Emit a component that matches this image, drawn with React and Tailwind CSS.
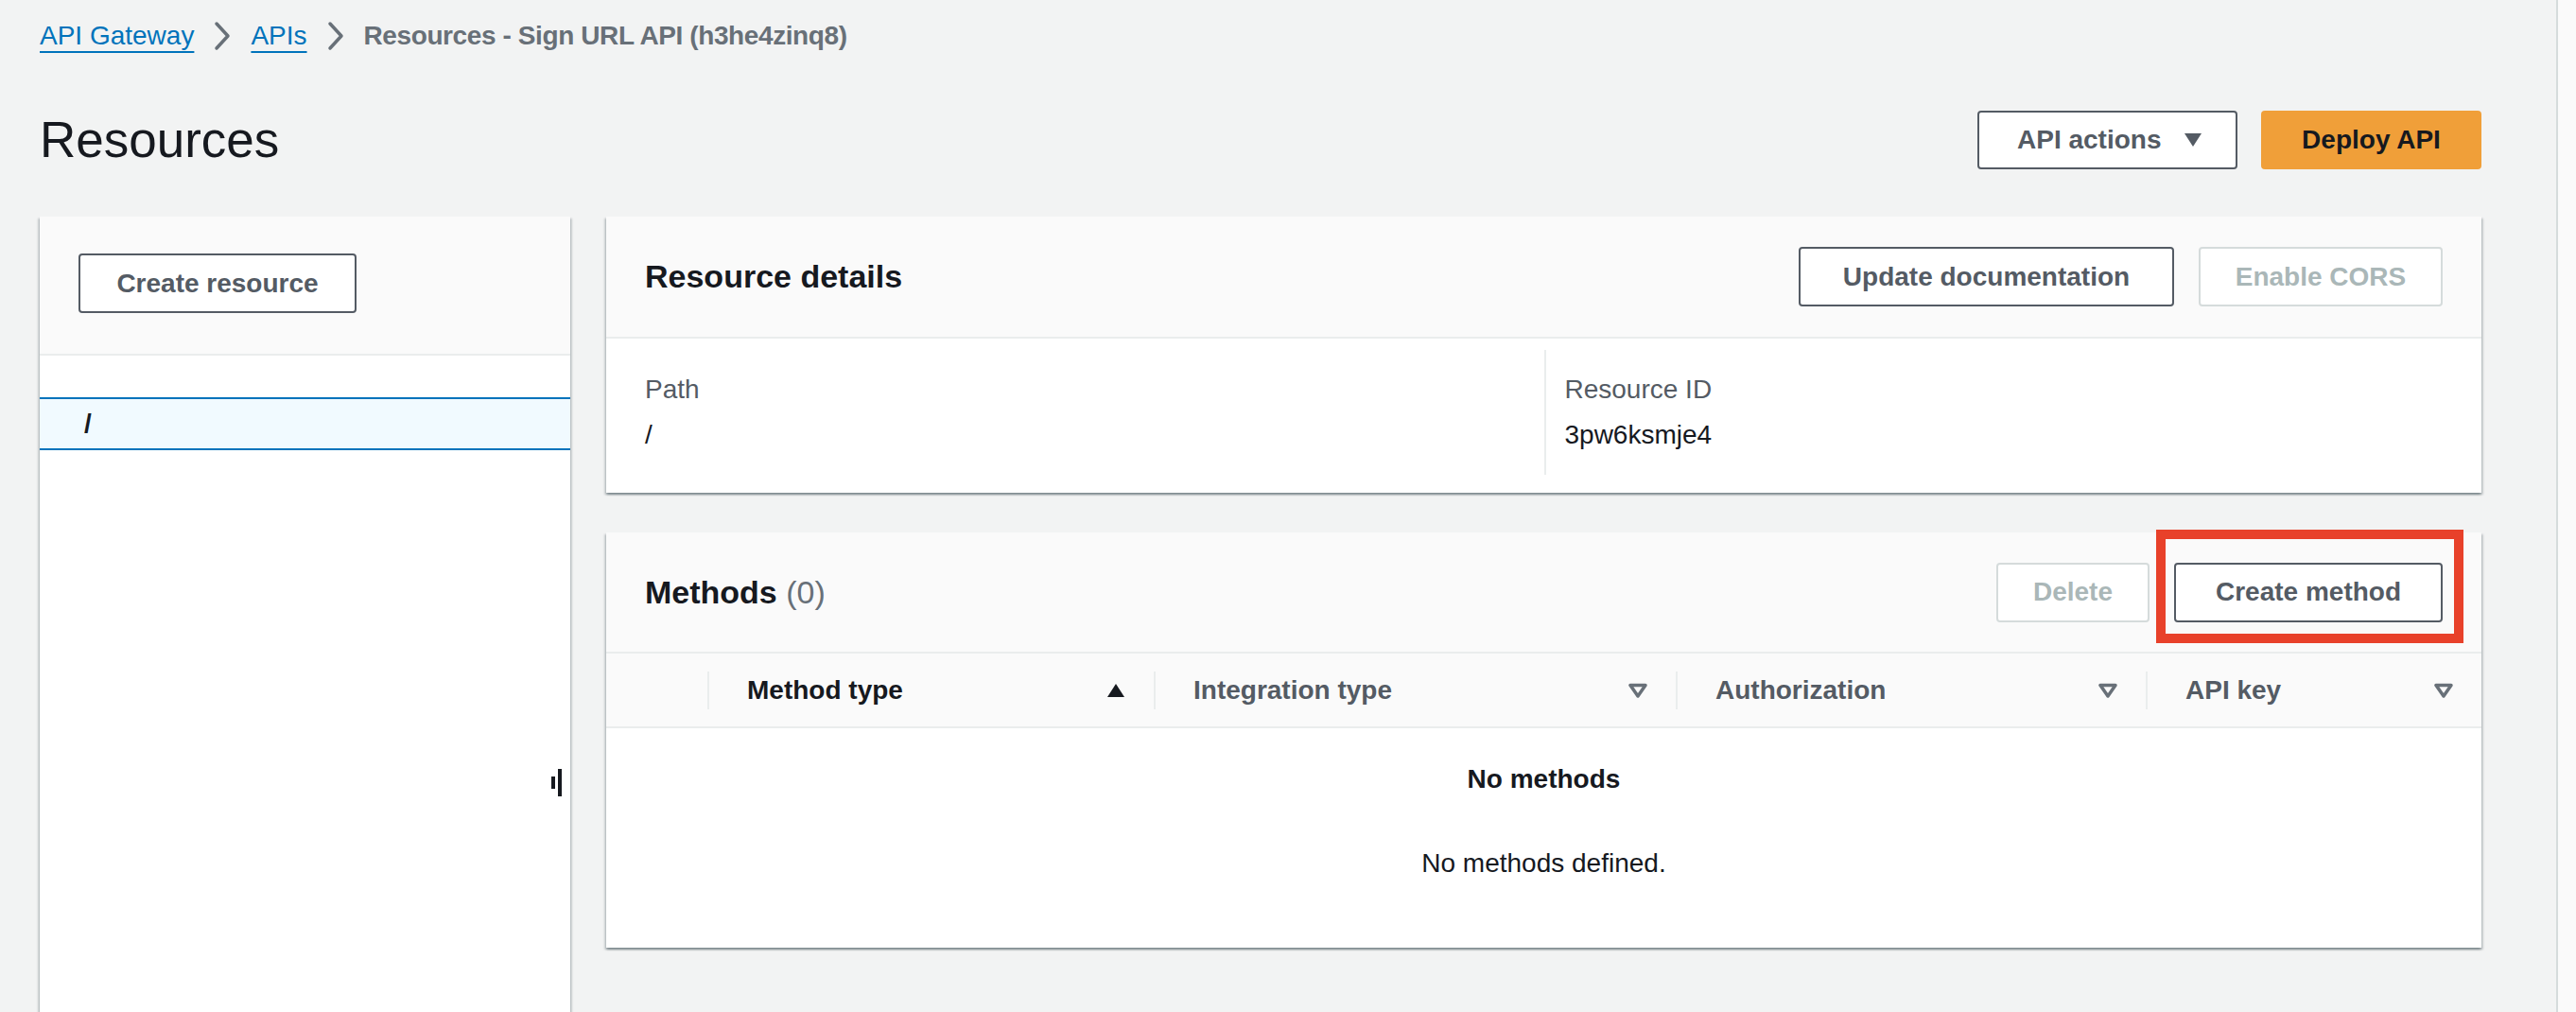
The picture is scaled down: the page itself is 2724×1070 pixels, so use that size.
import React from 'react';

const Chevron = () => (
  <svg width="20" height="32" viewBox="0 0 20 32" className="shrink-0">
    <polyline points="4,3 16,16 4,29" fill="none" stroke="#687078" strokeWidth="3.5" strokeLinecap="round" strokeLinejoin="round" />
  </svg>
);

const SortUp = () => (
  <svg width="22" height="16" viewBox="0 0 22 16" className="shrink-0">
    <polygon points="11,1 20,15 2,15" fill="#16191f" />
  </svg>
);

const SortIdle = () => (
  <svg width="22" height="16" viewBox="0 0 22 16" className="shrink-0">
    <polygon points="3,2.5 19,2.5 11,14" fill="none" stroke="#687078" strokeWidth="3.5" strokeLinejoin="round" />
  </svg>
);

const Button = ({ children, className = '', disabled = false }) => (
  <button
    type="button"
    className={`flex items-center justify-center h-[63px] rounded-[4px] border-2 bg-white text-[28px] font-bold ${
      disabled ? 'border-[#d5dbdb] text-[#aab7b8]' : 'border-[#545b64] text-[#545b64]'
    } ${className}`}
  >
    {children}
  </button>
);

const panelShadow =
  'shadow-[0_2px_2px_0_rgba(0,28,36,0.3),2px_2px_2px_0_rgba(0,28,36,0.15),-2px_2px_2px_0_rgba(0,28,36,0.15)]';

const columns = [
  { label: 'Method type', width: 'w-[472px]', active: true },
  { label: 'Integration type', width: 'w-[552px]' },
  { label: 'Authorization', width: 'w-[497px]' },
  { label: 'API key', width: 'flex-1' },
];

export default function App() {
  return (
    <div className="flex w-[2724px] h-[1070px] overflow-hidden bg-[#f2f3f3] text-[#16191f] font-['Liberation_Sans',Arial,sans-serif]">
      <main className="flex-1 flex flex-col min-w-0 pl-[42px] pr-[79px]">
        {/* breadcrumbs */}
        <nav className="flex items-center gap-[20px] h-[40px] mt-[18px] text-[28px] leading-[40px]">
          <a className="text-[#0073bb] underline decoration-2 underline-offset-[7px]">API Gateway</a>
          <Chevron />
          <a className="text-[#0073bb] underline decoration-2 underline-offset-[7px]">APIs</a>
          <Chevron />
          <span className="text-[#687078] font-bold tracking-[-0.4px]">Resources - Sign URL API (h3he4zinq8)</span>
        </nav>

        {/* page header */}
        <div className="flex items-center justify-between h-[62px] mt-[59px]">
          <h1 className="text-[53px] leading-[62px] font-normal text-[#16191f]">Resources</h1>
          <div className="flex items-center gap-[25px]">
            <button
              type="button"
              className="flex items-center w-[275px] h-[62px] pl-[40px] rounded-[4px] border-2 border-[#545b64] bg-white text-[28px] font-bold text-[#545b64]"
            >
              API actions
              <svg width="20" height="16" viewBox="0 0 20 16" className="ml-[24px]">
                <polygon points="1,1 19,1 10,15" fill="#545b64" />
              </svg>
            </button>
            <button
              type="button"
              className="w-[233px] h-[62px] rounded-[4px] bg-[#f09f39] text-[28px] font-bold text-[#16191f]"
            >
              Deploy API
            </button>
          </div>
        </div>

        <div className="flex gap-[38px] mt-[50px] flex-1 min-h-0">
          {/* resource tree */}
          <aside className={`relative w-[561px] shrink-0 bg-white ${panelShadow}`}>
            <div className="bg-[#fafafa] pt-[39px] pb-[43px] pl-[41px] border-b-2 border-[#eaeded]">
              <Button className="w-[294px]">Create resource</Button>
            </div>
            <div className="h-[44px]" />
            <div className="flex items-center h-[56px] pl-[47px] bg-[#f1faff] border-y-2 border-[#0073bb] text-[28px] font-bold">
              /
            </div>
            <div className="absolute left-[541px] top-[584px] flex items-center gap-[3px]">
              <span className="w-[4px] h-[13px] bg-[#16191f]" />
              <span className="w-[4px] h-[29px] bg-[#16191f]" />
            </div>
          </aside>

          <section className="flex-1 flex flex-col gap-[42px] min-w-0">
            {/* resource details */}
            <div className={`bg-white ${panelShadow}`}>
              <div className="flex items-center justify-between h-[129px] px-[41px] bg-[#fafafa] border-b-2 border-[#eaeded]">
                <h2 className="text-[34px] font-bold">Resource details</h2>
                <div className="flex gap-[26px]">
                  <Button className="w-[397px]">Update documentation</Button>
                  <Button className="w-[258px]" disabled>Enable CORS</Button>
                </div>
              </div>
              <div className="grid grid-cols-2 pt-[12px] pb-[19px] text-[28px] leading-[40px]">
                <div className="flex flex-col gap-[8px] py-[22px] pl-[41px]">
                  <span className="text-[#545b64]">Path</span>
                  <span>/</span>
                </div>
                <div className="flex flex-col gap-[8px] py-[22px] pl-[20px] border-l-2 border-[#eaeded]">
                  <span className="text-[#545b64]">Resource ID</span>
                  <span>3pw6ksmje4</span>
                </div>
              </div>
            </div>

            {/* methods */}
            <div className={`bg-white ${panelShadow}`}>
              <div className="flex items-center justify-between h-[128px] px-[41px] bg-[#fafafa] border-b-2 border-[#eaeded]">
                <h2 className="text-[34px] font-bold">
                  Methods <span className="font-normal text-[#687078]">(0)</span>
                </h2>
                <div className="relative flex gap-[26px]">
                  <Button className="w-[162px]" disabled>Delete</Button>
                  <Button className="w-[284px]">Create method</Button>
                  <div className="absolute left-[169px] -top-[35px] w-[325px] h-[120px] border-[10px] border-[#e8412a]" />
                </div>
              </div>

              <div className="flex h-[79px] bg-[#fafafa] border-b-2 border-[#eaeded] text-[28px] font-bold">
                <div className="w-[107px] shrink-0" />
                {columns.map((col) => (
                  <div key={col.label} className={`flex items-center ${col.width} shrink-0`}>
                    <span className="w-[2px] h-[40px] bg-[#eaeded]" />
                    <div className="flex-1 flex items-center justify-between pl-[40px] pr-[29px]">
                      <span className={col.active ? 'text-[#16191f]' : 'text-[#545b64]'}>{col.label}</span>
                      {col.active ? <SortUp /> : <SortIdle />}
                    </div>
                  </div>
                ))}
              </div>

              <div className="flex flex-col items-center pt-[34px] pb-[69px] text-[28px] leading-[40px]">
                <span className="font-bold">No methods</span>
                <span className="mt-[49px]">No methods defined.</span>
              </div>
            </div>
          </section>
        </div>
      </main>
      <div className="w-[21px] shrink-0 border-l-2 border-[#d5dbdb] bg-[#fafafa]" />
    </div>
  );
}
